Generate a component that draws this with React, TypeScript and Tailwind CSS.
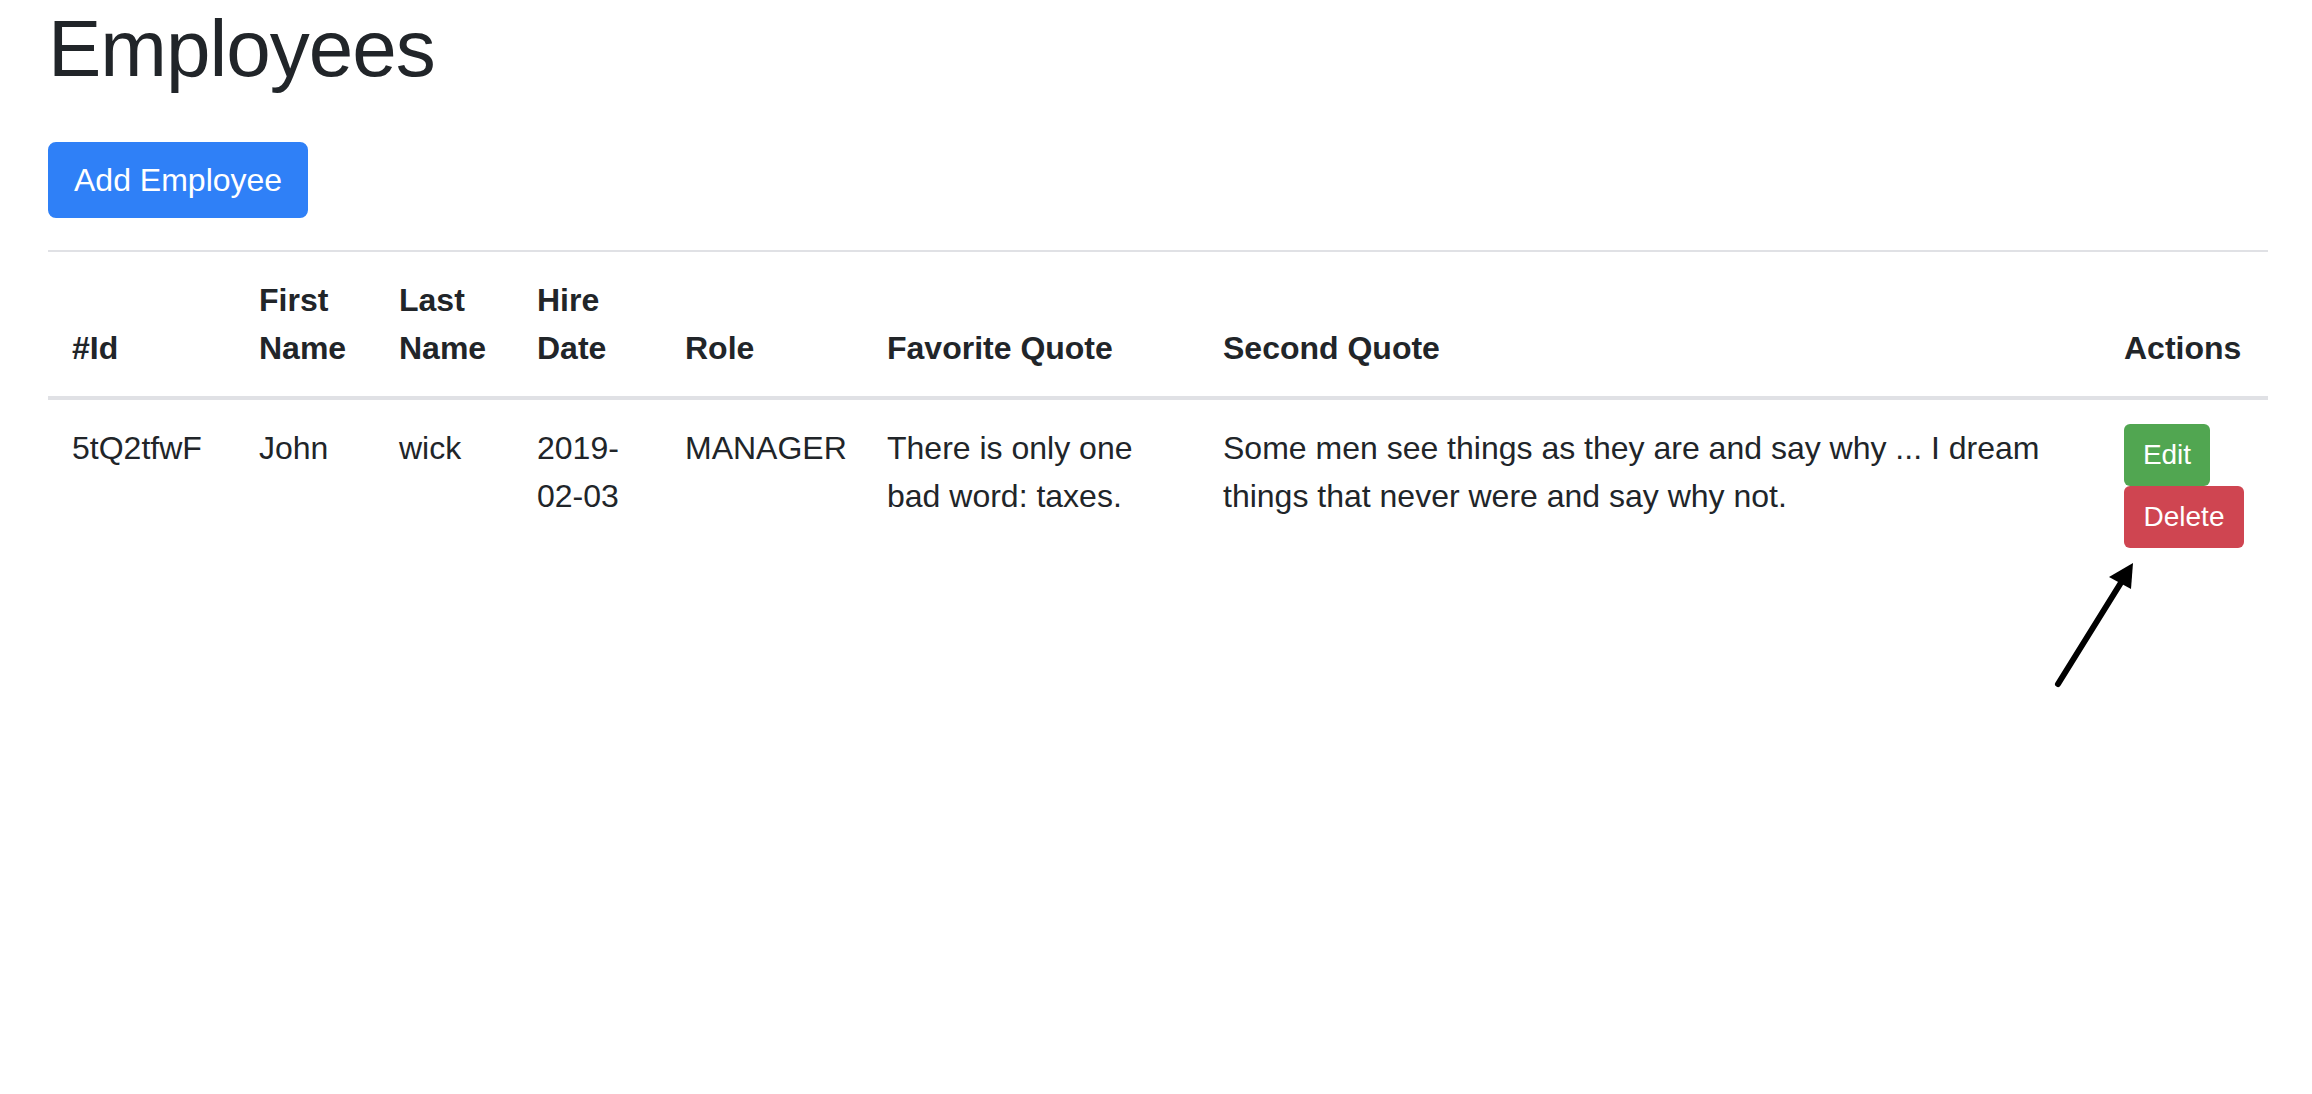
const employees = [
  {
    id: "5tQ2tfwF",
    firstName: "John",
    lastName: "wick",
    hireDate: ["2019-", "02-03"],
    role: "MANAGER",
    favoriteQuote: ["There is only one", "bad word: taxes."],
    secondQuote: [
      "Some men see things as they are and say why ... I dream",
      "things that never were and say why not.",
    ],
  },
];

export default function App() {
  return (
    <div className="relative min-h-screen bg-white text-[#212529] font-['Liberation_Sans',Arial,sans-serif]">
      <div className="pl-[48px] pr-[44px]">
        <h1 className="mt-[1px] mb-[45px] text-[80px] leading-[96px] font-medium tracking-[-1px]">
          Employees
        </h1>

        <button className="h-[76px] px-[24px] mb-[32px] rounded-[8px] border-2 border-[#2f80f7] bg-[#2f80f7] text-white text-[32px] leading-[48px]">
          Add Employee
        </button>

        <table className="w-full table-fixed border-collapse text-[32px] leading-[48px]">
          <colgroup>
            <col className="w-[187px]" />
            <col className="w-[140px]" />
            <col className="w-[138px]" />
            <col className="w-[148px]" />
            <col className="w-[202px]" />
            <col className="w-[336px]" />
            <col />
            <col className="w-[168px]" />
          </colgroup>
          <thead>
            <tr>
              {[
                "#Id",
                "First Name",
                "Last Name",
                "Hire Date",
                "Role",
                "Favorite Quote",
                "Second Quote",
                "Actions",
              ].map((h) => (
                <th
                  key={h}
                  className="p-[24px] text-left align-bottom font-bold border-t-2 border-b-4 border-[#e0e1e5]"
                >
                  {h}
                </th>
              ))}
            </tr>
          </thead>
          <tbody>
            {employees.map((e) => (
              <tr key={e.id}>
                <td className="p-[24px] align-top whitespace-nowrap">{e.id}</td>
                <td className="p-[24px] align-top whitespace-nowrap">{e.firstName}</td>
                <td className="p-[24px] align-top whitespace-nowrap">{e.lastName}</td>
                <td className="p-[24px] align-top whitespace-nowrap">
                  {e.hireDate[0]}
                  <br />
                  {e.hireDate[1]}
                </td>
                <td className="p-[24px] align-top whitespace-nowrap">{e.role}</td>
                <td className="p-[24px] align-top whitespace-nowrap">
                  {e.favoriteQuote[0]}
                  <br />
                  {e.favoriteQuote[1]}
                </td>
                <td className="p-[24px] align-top whitespace-nowrap">
                  {e.secondQuote[0]}
                  <br />
                  {e.secondQuote[1]}
                </td>
                <td className="p-[24px] align-top">
                  <div className="flex flex-col items-start">
                    <button className="h-[62px] w-[86px] rounded-[6px] bg-[#51a651] text-white text-[28px] leading-[42px]">
                      Edit
                    </button>
                    <button className="h-[62px] w-[120px] rounded-[6px] bg-[#cf4551] text-white text-[28px] leading-[42px]">
                      Delete
                    </button>
                  </div>
                </td>
              </tr>
            ))}
          </tbody>
        </table>
      </div>

      {/* annotation arrow pointing at the Delete button */}
      <svg
        className="absolute left-[2040px] top-[540px]"
        width="120"
        height="160"
        viewBox="0 0 120 160"
      >
        <line x1="18" y1="143" x2="82" y2="40" stroke="black" strokeWidth="6" strokeLinecap="round" />
        <polygon points="93,22 69,36 91,48" fill="black" />
      </svg>
    </div>
  );
}
